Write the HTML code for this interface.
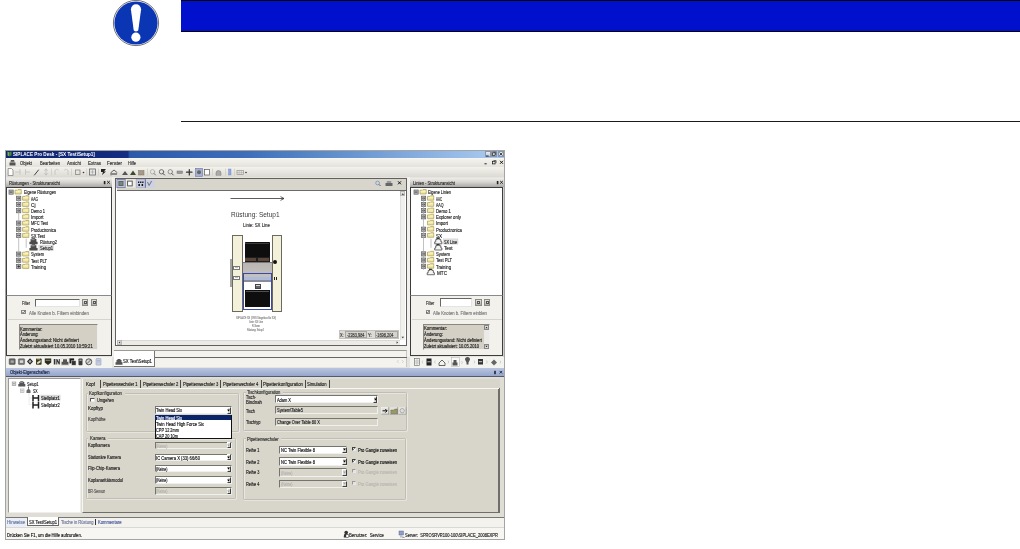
<!DOCTYPE html>
<html><head><meta charset="utf-8">
<style>
*{margin:0;padding:0;box-sizing:border-box}
html,body{width:1020px;height:549px;overflow:hidden;background:#fff;position:relative}
body{font-family:"Liberation Sans",sans-serif;color:#000}
.a{position:absolute}
.t{position:absolute;white-space:nowrap}
.t.s{-webkit-text-stroke:0.15px currentColor}
</style></head><body>
<svg class="a" style="left:110px;top:0px" width="52" height="48" viewBox="110 0 52 48"><circle cx="136" cy="23" r="22.6" fill="#fff" stroke="#333" stroke-width="0.7"/><circle cx="136" cy="23" r="21.6" fill="#0a36b4"/><path d="M130.9 9.3 A5.1 5.1 0 0 1 141.1 9.3 L138.3 30.3 Q138 31.4 136 31.4 Q134 31.4 133.7 30.3 Z" fill="#fff"/><circle cx="135.9" cy="37.2" r="4.6" fill="#fff"/></svg>
<div class="a" style="left:181.00px;top:0.00px;width:839.00px;height:32.00px;background:#000"></div>
<div class="a" style="left:181.00px;top:1.00px;width:839.00px;height:30.00px;background:#0010cc"></div>
<div class="a" style="left:181.00px;top:120.60px;width:839.00px;height:1.30px;background:#1a1a1a"></div>
<div class="a" style="left:0;top:0;width:1020px;height:549px;filter:blur(0.3px)">
<div class="a" style="left:4.80px;top:149.60px;width:500.40px;height:390.40px;background:#e6e4de;border:1.6px solid #a4a4a4"></div>
<div class="a" style="left:6.00px;top:150.50px;width:498.50px;height:7.50px;background:linear-gradient(90deg,#0c2470 0%,#142c82 24.4%,#2c58aa 24.8%,#3262b2 35%,#3e6eba 48%,#5a8ac8 63%,#80a8dc 80%,#a4c6ee 96%)"></div>
<svg class="a" style="left:6px;top:150px" width="8" height="8" viewBox="6 150 8 8"><path d="M7.5 151.5l2 1v4l-2-1z" fill="#7ab050"/><path d="M9.5 152l2-0.5v4l-2 0.5z" fill="#4a8a30"/></svg>
<div class="t" style="left:13.00px;top:152.44px;font-size:4.600px;line-height:5.52px;color:#fff;font-weight:bold;transform:scaleX(1.0067);transform-origin:0 50%;">SIPLACE Pro Desk - [SX Test\Setup1]</div>
<div class="a" style="left:484.50px;top:151.00px;width:6.20px;height:6.20px;background:linear-gradient(#e8eef6,#c4ccd8);border:0.5px solid #8a96a8"></div>
<div class="a" style="left:491.00px;top:151.00px;width:6.20px;height:6.20px;background:linear-gradient(#e8eef6,#c4ccd8);border:0.5px solid #8a96a8"></div>
<div class="a" style="left:497.80px;top:151.00px;width:6.20px;height:6.20px;background:linear-gradient(#e8eef6,#c4ccd8);border:0.5px solid #8a96a8"></div>
<svg class="a" style="left:484px;top:150px" width="21" height="8" viewBox="484 150 21 8"><path d="M486 156h2.6" stroke="#222" stroke-width="0.9"/><rect x="492.5" y="152.8" width="2.6" height="2.8" fill="none" stroke="#222" stroke-width="0.7"/><path d="M493.3 152.2h2.4v2.6" fill="none" stroke="#222" stroke-width="0.6"/><path d="M499.5 152.5l3 3M502.5 152.5l-3 3" stroke="#222" stroke-width="0.8"/></svg>
<div class="a" style="left:6.00px;top:158.00px;width:498.50px;height:9.00px;background:linear-gradient(#f6f5f1,#e4e2da)"></div>
<svg class="a" style="left:8px;top:159px" width="9" height="8" viewBox="8 159 9 8"><path d="M9.5 165.5v-3h6v3z" fill="#555"/><path d="M10.5 162.5v-2h4v2z" fill="#777"/><rect x="11" y="160" width="3" height="1" fill="#555"/></svg>
<div class="t s" style="left:20.00px;top:161.14px;font-size:4.600px;line-height:5.52px;color:#333;transform:scaleX(0.9025);transform-origin:0 50%;">Objekt</div>
<div class="t s" style="left:40.00px;top:161.14px;font-size:4.600px;line-height:5.52px;color:#333;transform:scaleX(0.8988);transform-origin:0 50%;">Bearbeiten</div>
<div class="t s" style="left:67.00px;top:161.14px;font-size:4.600px;line-height:5.52px;color:#333;transform:scaleX(0.9280);transform-origin:0 50%;">Ansicht</div>
<div class="t s" style="left:88.00px;top:161.14px;font-size:4.600px;line-height:5.52px;color:#333;transform:scaleX(0.9971);transform-origin:0 50%;">Extras</div>
<div class="t s" style="left:107.00px;top:161.14px;font-size:4.600px;line-height:5.52px;color:#333;transform:scaleX(0.9617);transform-origin:0 50%;">Fenster</div>
<div class="t s" style="left:128.00px;top:161.14px;font-size:4.600px;line-height:5.52px;color:#333;transform:scaleX(0.8692);transform-origin:0 50%;">Hilfe</div>
<svg class="a" style="left:482px;top:158px" width="22" height="9" viewBox="482 158 22 9"><path d="M484.5 163.8h2.2" stroke="#222" stroke-width="1"/><rect x="492.5" y="161.3" width="2.6" height="2.6" fill="none" stroke="#222" stroke-width="0.8"/><path d="M493.5 160.5h2.6v2.6" fill="none" stroke="#222" stroke-width="0.6"/><path d="M500 160.8l3 3M503 160.8l-3 3" stroke="#111" stroke-width="1"/></svg>
<div class="a" style="left:6.00px;top:167.00px;width:498.50px;height:10.00px;background:linear-gradient(#f3f2ed,#dcdad2)"></div>
<svg class="a" style="left:6px;top:167px" width="250" height="10" viewBox="6 167 250 10"><g fill="none" stroke-linecap="round"><path d="M8.5 168.5h3l1.5 1.5v5.5h-4.5z" fill="#fff" stroke="#777" stroke-width="0.7"/><path d="M15.5 172h4.5M20 169.5v5" stroke="#c8c8c8" stroke-width="1"/><path d="M25.5 169.5v5M25.5 172h4" stroke="#c8c8c8" stroke-width="1"/><path d="M34.5 175l4-5" stroke="#444" stroke-width="1"/><path d="M46 169v6M44.5 170.5l1.5-1.5 1.5 1.5M44.5 173.5l1.5 1.5 1.5-1.5" stroke="#bbb" stroke-width="0.8"/><path d="M55 174.5v-3.5a2 2 0 0 1 3.5-1" stroke="#c4c4c4" stroke-width="0.9"/><path d="M64.5 170a2 2 0 0 1 3.5 1v3.5" stroke="#c4c4c4" stroke-width="0.9"/><rect x="75.5" y="170" width="4.5" height="4.5" stroke="#888" stroke-width="0.8"/><circle cx="83.5" cy="172.5" r="0.8" fill="#333" stroke="none"/><rect x="89.5" y="169" width="6" height="6" fill="#e8e8e8" stroke="#666" stroke-width="0.8"/><path d="M91 172h3M92.5 170.5v3" stroke="#999" stroke-width="0.6"/><path d="M101 169h5l-2 2.5h2l-4 3.5 1-3h-2z" fill="#222" stroke="none"/><path d="M111 175v-2.5l3-2.5 3 2.5" stroke="#555" stroke-width="0.9"/><rect x="111" y="173" width="6" height="2" fill="#888" stroke="none"/><path d="M122 175l3-4 3 4z" fill="#555" stroke="none"/><path d="M130 175l3-4.5 3 4.5z" fill="#3a4a2a" stroke="none"/><rect x="138.5" y="170.5" width="5.5" height="4.5" fill="#a89888" stroke="#776" stroke-width="0.5"/><circle cx="152.5" cy="171.8" r="2.2" stroke="#aaa" stroke-width="0.8"/><path d="M154 173.5l1.5 1.5" stroke="#777" stroke-width="1"/><circle cx="161.5" cy="171.8" r="2.2" stroke="#666" stroke-width="0.9"/><path d="M163 173.5l1.5 1.5" stroke="#444" stroke-width="1"/><circle cx="170.3" cy="171.8" r="2.2" stroke="#888" stroke-width="0.9"/><path d="M171.8 173.5l1.5 1.5" stroke="#555" stroke-width="1"/><rect x="177" y="171" width="5.5" height="2.5" fill="#999" stroke="#777" stroke-width="0.5"/><path d="M189.3 169.5v5.5M186.5 172.2h5.5" stroke="#333" stroke-width="1.2"/><rect x="195.5" y="168.3" width="7" height="8" fill="#a8b0d0" stroke="#6a78b0" stroke-width="0.6"/><circle cx="199" cy="172.3" r="2" fill="#666" stroke="none"/><rect x="204.5" y="169.5" width="5" height="5.5" fill="#fff" stroke="#555" stroke-width="0.7"/><path d="M216 175v-2a2.5 2.5 0 0 1 5 0v2z" fill="#aaa" stroke="#777" stroke-width="0.5"/><rect x="228.5" y="169" width="2.5" height="6" fill="#90a8e0" stroke="#7088c0" stroke-width="0.4"/><rect x="237" y="170.5" width="6.5" height="4" stroke="#888" stroke-width="0.6"/><path d="M237 172.5h6.5M239.2 170.5v4M241.4 170.5v4" stroke="#999" stroke-width="0.4"/><circle cx="246" cy="172.5" r="0.8" fill="#333" stroke="none"/></g><g fill="#c8c6be"><rect x="51" y="168.5" width="0.6" height="7"/><rect x="71" y="168.5" width="0.6" height="7"/><rect x="86.5" y="168.5" width="0.6" height="7"/><rect x="98" y="168.5" width="0.6" height="7"/><rect x="147" y="168.5" width="0.6" height="7"/><rect x="212" y="168.5" width="0.6" height="7"/><rect x="225" y="168.5" width="0.6" height="7"/><rect x="234" y="168.5" width="0.6" height="7"/></g></svg>
<div class="a" style="left:6.00px;top:177.50px;width:105.50px;height:9.50px;background:linear-gradient(#eeede9 0%,#d6d5d1 45%,#a9a8a4 100%)"></div>
<div class="t s" style="left:9.20px;top:181.04px;font-size:4.600px;line-height:5.52px;color:#2a2a2a;transform:scaleX(0.8944);transform-origin:0 50%;">Rüstungen - Strukturansicht</div>
<svg class="a" style="left:101.5px;top:179px" width="10" height="7" viewBox="101.5 179 10 7"><rect x="103.3" y="181" width="1.6" height="3.2" fill="#222"/><path d="M106.7 181l2.6 2.6M109.3 181l-2.6 2.6" stroke="#111" stroke-width="0.9"/></svg>
<div class="a" style="left:6.00px;top:187.00px;width:105.50px;height:109.50px;background:#fff;border:1px solid #3c3c3c;border-top-width:1.4px;border-bottom:none"></div>
<svg class="a" style="left:4.300000000000001px;top:186.2px" width="95" height="88.60000000000001" viewBox="4.300000000000001 186.2 95 88.60000000000001"><rect x="9.30" y="190.20" width="4.2" height="4.2" fill="#b4b4b4" stroke="#606060" stroke-width="0.7"/><path d="M10.10 192.30h2.6" stroke="#222" stroke-width="0.7"/><path d="M15.30 190.40h2.4l0.7-0.7h3.1v4.5h-6.2z" fill="#efe6a2" stroke="#a89a50" stroke-width="0.7" stroke-linejoin="round"/><path d="M15.90 191.60h5.2" stroke="#fff8d0" stroke-width="0.7"/><rect x="16.90" y="196.40" width="4.2" height="4.2" fill="#b4b4b4" stroke="#606060" stroke-width="0.7"/><path d="M17.70 198.50h2.6" stroke="#222" stroke-width="0.7"/><path d="M19.00 197.20v2.6" stroke="#222" stroke-width="0.7"/><path d="M22.90 196.60h2.4l0.7-0.7h3.1v4.5h-6.2z" fill="#efe6a2" stroke="#a89a50" stroke-width="0.7" stroke-linejoin="round"/><path d="M23.50 197.80h5.2" stroke="#fff8d0" stroke-width="0.7"/><rect x="16.90" y="202.60" width="4.2" height="4.2" fill="#b4b4b4" stroke="#606060" stroke-width="0.7"/><path d="M17.70 204.70h2.6" stroke="#222" stroke-width="0.7"/><path d="M19.00 203.40v2.6" stroke="#222" stroke-width="0.7"/><path d="M22.90 202.80h2.4l0.7-0.7h3.1v4.5h-6.2z" fill="#efe6a2" stroke="#a89a50" stroke-width="0.7" stroke-linejoin="round"/><path d="M23.50 204.00h5.2" stroke="#fff8d0" stroke-width="0.7"/><rect x="16.90" y="208.80" width="4.2" height="4.2" fill="#b4b4b4" stroke="#606060" stroke-width="0.7"/><path d="M17.70 210.90h2.6" stroke="#222" stroke-width="0.7"/><path d="M19.00 209.60v2.6" stroke="#222" stroke-width="0.7"/><path d="M22.90 209.00h2.4l0.7-0.7h3.1v4.5h-6.2z" fill="#efe6a2" stroke="#a89a50" stroke-width="0.7" stroke-linejoin="round"/><path d="M23.50 210.20h5.2" stroke="#fff8d0" stroke-width="0.7"/><path d="M22.90 215.20h2.4l0.7-0.7h3.1v4.5h-6.2z" fill="#efe6a2" stroke="#a89a50" stroke-width="0.7" stroke-linejoin="round"/><path d="M23.50 216.40h5.2" stroke="#fff8d0" stroke-width="0.7"/><rect x="16.90" y="221.20" width="4.2" height="4.2" fill="#b4b4b4" stroke="#606060" stroke-width="0.7"/><path d="M17.70 223.30h2.6" stroke="#222" stroke-width="0.7"/><path d="M19.00 222.00v2.6" stroke="#222" stroke-width="0.7"/><path d="M22.90 221.40h2.4l0.7-0.7h3.1v4.5h-6.2z" fill="#efe6a2" stroke="#a89a50" stroke-width="0.7" stroke-linejoin="round"/><path d="M23.50 222.60h5.2" stroke="#fff8d0" stroke-width="0.7"/><rect x="16.90" y="227.40" width="4.2" height="4.2" fill="#b4b4b4" stroke="#606060" stroke-width="0.7"/><path d="M17.70 229.50h2.6" stroke="#222" stroke-width="0.7"/><path d="M19.00 228.20v2.6" stroke="#222" stroke-width="0.7"/><path d="M22.90 227.60h2.4l0.7-0.7h3.1v4.5h-6.2z" fill="#efe6a2" stroke="#a89a50" stroke-width="0.7" stroke-linejoin="round"/><path d="M23.50 228.80h5.2" stroke="#fff8d0" stroke-width="0.7"/><rect x="16.90" y="233.60" width="4.2" height="4.2" fill="#b4b4b4" stroke="#606060" stroke-width="0.7"/><path d="M17.70 235.70h2.6" stroke="#222" stroke-width="0.7"/><path d="M22.90 233.80h2.4l0.7-0.7h3.1v4.5h-6.2z" fill="#efe6a2" stroke="#a89a50" stroke-width="0.7" stroke-linejoin="round"/><path d="M23.50 235.00h5.2" stroke="#fff8d0" stroke-width="0.7"/><path d="M29.70 244.50v-2.6h1.2v-2.6h1.2v-1.2h3.4v1.2h1.2v2.6h1.2v2.6z" fill="#4a4a4a"/><rect x="31.60" y="238.60" width="3.4" height="1.8" fill="#8a8a8a"/><path d="M29.70 250.70v-2.6h1.2v-2.6h1.2v-1.2h3.4v1.2h1.2v2.6h1.2v2.6z" fill="#4a4a4a"/><rect x="31.60" y="244.80" width="3.4" height="1.8" fill="#8a8a8a"/><rect x="39.10" y="245.40" width="14.60" height="5.4" fill="#e2e2e2" stroke="#999" stroke-width="0.4" stroke-dasharray="0.6 0.6"/><rect x="16.90" y="252.20" width="4.2" height="4.2" fill="#b4b4b4" stroke="#606060" stroke-width="0.7"/><path d="M17.70 254.30h2.6" stroke="#222" stroke-width="0.7"/><path d="M19.00 253.00v2.6" stroke="#222" stroke-width="0.7"/><path d="M22.90 252.40h2.4l0.7-0.7h3.1v4.5h-6.2z" fill="#efe6a2" stroke="#a89a50" stroke-width="0.7" stroke-linejoin="round"/><path d="M23.50 253.60h5.2" stroke="#fff8d0" stroke-width="0.7"/><rect x="16.90" y="258.40" width="4.2" height="4.2" fill="#b4b4b4" stroke="#606060" stroke-width="0.7"/><path d="M17.70 260.50h2.6" stroke="#222" stroke-width="0.7"/><path d="M19.00 259.20v2.6" stroke="#222" stroke-width="0.7"/><path d="M22.90 258.60h2.4l0.7-0.7h3.1v4.5h-6.2z" fill="#efe6a2" stroke="#a89a50" stroke-width="0.7" stroke-linejoin="round"/><path d="M23.50 259.80h5.2" stroke="#fff8d0" stroke-width="0.7"/><rect x="16.90" y="264.60" width="4.2" height="4.2" fill="#b4b4b4" stroke="#606060" stroke-width="0.7"/><path d="M17.70 266.70h2.6" stroke="#222" stroke-width="0.7"/><path d="M19.00 265.40v2.6" stroke="#222" stroke-width="0.7"/><path d="M22.90 264.80h2.4l0.7-0.7h3.1v4.5h-6.2z" fill="#efe6a2" stroke="#a89a50" stroke-width="0.7" stroke-linejoin="round"/><path d="M23.50 266.00h5.2" stroke="#fff8d0" stroke-width="0.7"/><path d="M19 196V264" stroke="#a8a8a8" stroke-width="0.7"/><path d="M26.5 239V248" stroke="#a8a8a8" stroke-width="0.7"/></svg>
<div class="t s" style="left:23.70px;top:190.44px;font-size:4.600px;line-height:5.52px;color:#262626;transform:scaleX(0.8454);transform-origin:0 50%;">Eigene Rüstungen</div>
<div class="t s" style="left:31.30px;top:196.64px;font-size:4.600px;line-height:5.52px;color:#262626;transform:scaleX(0.7203);transform-origin:0 50%;">AAG</div>
<div class="t s" style="left:31.30px;top:202.84px;font-size:4.600px;line-height:5.52px;color:#262626;transform:scaleX(1.0357);transform-origin:0 50%;">Cj</div>
<div class="t s" style="left:31.30px;top:209.04px;font-size:4.600px;line-height:5.52px;color:#262626;transform:scaleX(0.8692);transform-origin:0 50%;">Demo 1</div>
<div class="t s" style="left:31.30px;top:215.24px;font-size:4.600px;line-height:5.52px;color:#262626;transform:scaleX(0.9587);transform-origin:0 50%;">Import</div>
<div class="t s" style="left:31.30px;top:221.44px;font-size:4.600px;line-height:5.52px;color:#262626;transform:scaleX(0.8675);transform-origin:0 50%;">MFC Test</div>
<div class="t s" style="left:31.30px;top:227.64px;font-size:4.600px;line-height:5.52px;color:#262626;transform:scaleX(0.8808);transform-origin:0 50%;">Productronica</div>
<div class="t s" style="left:31.30px;top:233.84px;font-size:4.600px;line-height:5.52px;color:#262626;transform:scaleX(0.8878);transform-origin:0 50%;">SX Test</div>
<div class="t s" style="left:39.90px;top:240.04px;font-size:4.600px;line-height:5.52px;color:#262626;transform:scaleX(0.8632);transform-origin:0 50%;">Rüstung2</div>
<div class="t s" style="left:39.90px;top:246.24px;font-size:4.600px;line-height:5.52px;color:#262626;transform:scaleX(0.8916);transform-origin:0 50%;">Setup1</div>
<div class="t s" style="left:31.30px;top:252.44px;font-size:4.600px;line-height:5.52px;color:#262626;transform:scaleX(0.8476);transform-origin:0 50%;">System</div>
<div class="t s" style="left:31.30px;top:258.64px;font-size:4.600px;line-height:5.52px;color:#262626;transform:scaleX(0.8983);transform-origin:0 50%;">Test PLT</div>
<div class="t s" style="left:31.30px;top:264.84px;font-size:4.600px;line-height:5.52px;color:#262626;transform:scaleX(0.9119);transform-origin:0 50%;">Training</div>
<div class="a" style="left:6.00px;top:295.30px;width:105.50px;height:61.20px;background:#f2f1ec;border:1px solid #3c3c3c;border-top:1.3px solid #8a8a8a;border-bottom-width:1.3px"></div>
<div class="t s" style="left:21.80px;top:300.74px;font-size:4.600px;line-height:5.52px;color:#333;transform:scaleX(0.7825);transform-origin:0 50%;">Filter</div>
<div class="a" style="left:35.00px;top:298.50px;width:44.50px;height:8.00px;background:#fff;border:0.9px solid #666;border-right-color:#e4e4e4;border-bottom-color:#e4e4e4"></div>
<div class="a" style="left:82.00px;top:299.00px;width:6.20px;height:6.50px;background:linear-gradient(#e6e5e0,#b0afa8);border:0.5px solid #8a8a84"></div>
<div class="a" style="left:83.60px;top:300.60px;width:3.00px;height:3.30px;border:0.5px solid #555;background:#d8d8d4"></div>
<div class="a" style="left:91.00px;top:299.00px;width:6.20px;height:6.50px;background:linear-gradient(#e6e5e0,#b0afa8);border:0.5px solid #8a8a84"></div>
<div class="a" style="left:92.60px;top:300.60px;width:3.00px;height:3.30px;border:0.5px solid #555;background:#d8d8d4"></div>
<div class="a" style="left:21.20px;top:309.60px;width:4.80px;height:4.80px;background:#f4f4f2;border:0.7px solid #8a8a8a"></div>
<svg class="a" style="left:21px;top:309px" width="6" height="6" viewBox="21 309 6 6"><path d="M22.2 311.8l1.2 1.3 1.8-2.6" fill="none" stroke="#444" stroke-width="0.7"/></svg>
<div class="t s" style="left:29.10px;top:310.54px;font-size:4.600px;line-height:5.52px;color:#7a7a7a;transform:scaleX(0.9385);transform-origin:0 50%;">Alle Knoten b. Filtern einbinden</div>
<div class="a" style="left:7.50px;top:319.00px;width:103.00px;height:0.70px;background:#d6d4cc"></div>
<div class="a" style="left:19.00px;top:324.00px;width:79.00px;height:25.50px;background:#d4d0c6;border:0.6px solid #8a8880;border-right-color:#eee;border-bottom-color:#eee"></div>
<div class="t s" style="left:19.70px;top:326.54px;font-size:4.600px;line-height:5.52px;color:#1a1a1a;transform:scaleX(0.8980);transform-origin:0 50%;">Kommentar:</div>
<div class="t s" style="left:19.70px;top:332.39px;font-size:4.600px;line-height:5.52px;color:#1a1a1a;transform:scaleX(0.8715);transform-origin:0 50%;">Änderung:</div>
<div class="t s" style="left:19.70px;top:338.24px;font-size:4.600px;line-height:5.52px;color:#1a1a1a;transform:scaleX(0.9192);transform-origin:0 50%;">Änderungsstand: Nicht definiert</div>
<div class="t s" style="left:19.70px;top:344.09px;font-size:4.600px;line-height:5.52px;color:#1a1a1a;transform:scaleX(0.9037);transform-origin:0 50%;">Zuletzt aktualisiert 10.05.2010 10:59:21</div>
<div class="a" style="left:6.00px;top:356.60px;width:105.50px;height:11.40px;background:#f3f3ef"></div>
<svg class="a" style="left:6px;top:356px" width="106" height="12" viewBox="6 356 106 12"><rect x="9.2" y="358.8" width="6" height="5.6" rx="0.6" fill="#666" stroke="#444" stroke-width="0.5"/><rect x="10.6" y="360.4" width="3.2" height="2.4" fill="#a8a8a8"/><rect x="18.4" y="358.8" width="6.2" height="5.6" rx="0.6" fill="#777" stroke="#555" stroke-width="0.5"/><rect x="19.8" y="360.3" width="3.4" height="2.6" fill="#d8d8d8"/><path d="M30 358.3l3 3.2-3 3.2-3-3.2z" fill="#222"/><path d="M30 359.8l1.6 1.7-1.6 1.7-1.6-1.7z" fill="#aaa"/><rect x="36" y="358.5" width="5.6" height="6.2" rx="0.8" fill="#3a3828"/><path d="M36.8 362.5l3.8-2.5v2.2l-3 2z" fill="#e8e0b0"/><rect x="37" y="358" width="3" height="1.4" fill="#c8c090"/><path d="M44.8 358.5h6.4v4l-3.2 2.5-3.2-2.5z" fill="#2a2a22"/><rect x="45.6" y="359.8" width="4.8" height="1" fill="#8a8a60"/><path d="M53.8 364.5v-5.5h1.6v5.5zM56.3 364.5v-5.5h1l1.5 3v-3h1v5.5h-1l-1.5-3v3z" fill="#333"/><path d="M61.5 364.8v-3h7v3zM63 361.8v-2.6h4v2.6z" fill="#555"/><rect x="61" y="358.5" width="8" height="7" fill="none" stroke="#ccc" stroke-width="0.4"/><rect x="69.5" y="358.4" width="4.6" height="5" fill="#1a1a1a"/><rect x="71.6" y="360.8" width="4.4" height="4.4" fill="#333" stroke="#e8e8e0" stroke-width="0.5"/><rect x="78.5" y="358.5" width="4" height="6.8" rx="0.8" fill="#3a3a3a"/><rect x="79.4" y="359.6" width="2.2" height="1.2" fill="#bbb"/><circle cx="88.8" cy="361.8" r="3" fill="#d8d8d8" stroke="#333" stroke-width="0.8"/><path d="M86.8 363.8l4-4" stroke="#333" stroke-width="0.7"/><rect x="96" y="358.5" width="5" height="6.6" rx="0.6" fill="#c8d0e4" stroke="#8890b0" stroke-width="0.5"/><path d="M97 360.5h3M97 362h3" stroke="#8890b0" stroke-width="0.4"/></svg>
<div class="a" style="left:111.50px;top:177.00px;width:4.50px;height:179.50px;background:linear-gradient(90deg,#f4f3f0,#eceae6)"></div>
<div class="a" style="left:115.00px;top:177.50px;width:292.00px;height:168.80px;background:#fff;border:1.8px solid #606060"></div>
<div class="a" style="left:116.90px;top:178.80px;width:288.80px;height:12.00px;background:#d8d5cd;border-bottom:1.2px solid #6a6a6a"></div>
<svg class="a" style="left:116px;top:178px" width="40" height="12" viewBox="116 178 40 12"><rect x="116.9" y="179.3" width="8.3" height="8.4" fill="#c4c6d4" stroke="#5a6a9a" stroke-width="0.7"/><rect x="118.4" y="181" width="5.1" height="5" fill="#5e6866"/><rect x="119.4" y="182" width="3.1" height="3" fill="#7a8480"/><rect x="125.8" y="179.3" width="9.8" height="8.4" fill="#ecebe6"/><rect x="127.6" y="181.1" width="4.6" height="4.8" fill="#fff" stroke="#4a4a4a" stroke-width="0.9"/><rect x="136.2" y="179.3" width="9" height="8.4" fill="#c6cce0" stroke="#9aa4c8" stroke-width="0.5"/><path d="M138 181.6h1.3v1.4H138zM140.1 181.6h1.3v1.4h-1.3zM142.2 181.6h1.3v1.4h-1.3zM138.4 184h1.5v2h-1.5zM141.6 184h1.5v2h-1.5z" fill="#111"/><path d="M145.4 179.3v8.4" stroke="#34447a" stroke-width="0.8"/><rect x="145.8" y="179.3" width="8.8" height="8.4" fill="#ccd2e4"/><path d="M147.5 182l1.6 3.5 2.5-4.5" fill="none" stroke="#666" stroke-width="0.9"/></svg>
<svg class="a" style="left:372px;top:179px" width="34" height="10" viewBox="372 179 34 10"><circle cx="377.6" cy="183" r="1.9" fill="none" stroke="#6a8ab8" stroke-width="0.7"/><path d="M379 184.4l1.6 1.6" stroke="#555" stroke-width="0.9"/><path d="M385.5 186v-3h7v3z" fill="#666"/><rect x="386.8" y="181" width="4.4" height="2" fill="#999"/><path d="M398 181.3l3 3M401 181.3l-3 3" stroke="#111" stroke-width="1"/></svg>
<div class="a" style="left:400.00px;top:191.00px;width:5.40px;height:149.00px;background:#f1f0ec;border-left:0.5px solid #e0e0e0"></div>
<div class="a" style="left:400.40px;top:191.40px;width:4.70px;height:4.70px;background:#e6e4de;border:0.4px solid #b8b8b8"></div>
<svg class="a" style="left:400px;top:191px" width="6" height="149" viewBox="400 191 6 149"><path d="M401.5 194.7l1.3-1.5 1.3 1.5z" fill="#333"/><path d="M401.5 336.8l1.3 1.5 1.3-1.5z" fill="#333"/></svg>
<div class="a" style="left:116.90px;top:340.00px;width:283.10px;height:5.00px;background:#ecebe6;border-top:0.5px solid #d8d8d8"></div>
<div class="a" style="left:117.30px;top:340.30px;width:4.80px;height:4.50px;background:#e6e4de;border:0.4px solid #b8b8b8"></div>
<svg class="a" style="left:116px;top:340px" width="290" height="6" viewBox="116 340 290 6"><path d="M120.2 341.2v2.6l-1.5-1.3z" fill="#333"/><path d="M396.6 341.2v2.6l1.5-1.3z" fill="#333"/></svg>
<div class="a" style="left:400.00px;top:340.00px;width:5.40px;height:5.00px;background:#fff"></div>
<div class="a" style="left:339.00px;top:330.30px;width:59.50px;height:8.30px;background:#dddbd5;border:0.5px solid #c4c2bc"></div>
<div class="t s" style="left:340.30px;top:332.74px;font-size:4.600px;line-height:5.52px;color:#333;transform:scaleX(0.8279);transform-origin:0 50%;">X:</div>
<div class="a" style="left:345.00px;top:331.00px;width:21.50px;height:7.00px;background:#d6d4ce;border:0.5px solid #a8a6a0"></div>
<div class="t s" style="left:346.50px;top:332.74px;font-size:4.600px;line-height:5.52px;color:#333;transform:scaleX(0.8447);transform-origin:0 50%;">-2283,984</div>
<div class="t s" style="left:368.00px;top:332.74px;font-size:4.600px;line-height:5.52px;color:#333;transform:scaleX(0.8795);transform-origin:0 50%;">Y:</div>
<div class="a" style="left:374.50px;top:331.00px;width:23.50px;height:7.00px;background:#d6d4ce;border:0.5px solid #a8a6a0"></div>
<div class="t s" style="left:376.00px;top:332.74px;font-size:4.600px;line-height:5.52px;color:#333;transform:scaleX(0.8447);transform-origin:0 50%;">-1698,204</div>
<svg class="a" style="left:228px;top:194px" width="60" height="8" viewBox="228 194 60 8"><path d="M230.5 198.5H284" stroke="#333" stroke-width="0.8"/><path d="M280.5 196.6l3.5 1.9-3.5 1.9" fill="none" stroke="#333" stroke-width="0.8"/></svg>
<div class="t" style="left:231.00px;top:210.39px;font-size:6.523px;line-height:7.83px;color:#3a3a3a;transform:scaleX(0.826);transform-origin:0 50%;font-size:7.9px;line-height:9px;top:209.8px">Rüstung: Setup1</div>
<div class="t s" style="left:243.00px;top:223.24px;font-size:4.600px;line-height:5.52px;color:#333;transform:scaleX(0.9511);transform-origin:0 50%;">Linie: SX Line</div>
<div class="a" style="left:232.00px;top:234.50px;width:10.50px;height:77.20px;background:#f3f1da;border:0.8px solid #6a6a60"></div>
<div class="a" style="left:272.00px;top:234.50px;width:9.60px;height:77.20px;background:#f3f1da;border:0.8px solid #6a6a60"></div>
<div class="a" style="left:230.30px;top:259.00px;width:1.80px;height:28.00px;background:#a4a4a4"></div>
<div class="a" style="left:244.50px;top:242.40px;width:25.50px;height:14.30px;background:#0e0e0e;border-radius:0.6px"></div>
<div class="a" style="left:245.20px;top:243.20px;width:24.00px;height:1.00px;background:#3a3a3a"></div>
<div class="a" style="left:244.50px;top:256.50px;width:25.50px;height:5.50px;background:#1e1e1e"></div>
<div class="a" style="left:245.30px;top:258.00px;width:11.00px;height:3.00px;background:#5a4638"></div>
<div class="a" style="left:258.00px;top:258.00px;width:11.00px;height:3.00px;background:#5a4638"></div>
<div class="a" style="left:242.50px;top:262.00px;width:29.50px;height:10.80px;background:linear-gradient(#7a7876 0%,#7a7876 12%,#bab6b4 13%,#c2bebc 100%)"></div>
<div class="a" style="left:272.80px;top:260.20px;width:3.90px;height:3.90px;background:#111;border-radius:50%"></div>
<div class="a" style="left:242.50px;top:272.60px;width:29.50px;height:37.40px;background:#fff;border:1px solid #3a4aa8"></div>
<div class="a" style="left:243.50px;top:273.60px;width:27.50px;height:3.00px;background:#c4c0c0"></div>
<div class="a" style="left:243.50px;top:276.60px;width:27.50px;height:3.70px;background:#aebcdc"></div>
<div class="a" style="left:243.50px;top:280.30px;width:27.50px;height:2.20px;background:#8a8a98"></div>
<div class="a" style="left:233.00px;top:265.50px;width:7.20px;height:4.20px;background:#fff;border:0.6px solid #777"></div>
<div class="a" style="left:233.00px;top:275.50px;width:7.20px;height:4.20px;background:#fff;border:0.6px solid #777"></div>
<svg class="a" style="left:233px;top:265px" width="8" height="15" viewBox="233 265 8 15"><path d="M235 267.6h3M235 277.6h3" stroke="#888" stroke-width="0.6"/></svg>
<div class="a" style="left:273.60px;top:276.50px;width:1.60px;height:3.80px;background:#222"></div>
<div class="a" style="left:275.80px;top:276.50px;width:1.60px;height:3.80px;background:#222"></div>
<div class="a" style="left:255.00px;top:284.00px;width:6.00px;height:5.20px;background:#d8d8d8;border:0.6px solid #444"></div>
<div class="a" style="left:256.40px;top:285.60px;width:3.20px;height:2.00px;background:#666"></div>
<div class="a" style="left:245.00px;top:290.40px;width:25.00px;height:16.60px;background:#0e0e0e"></div>
<div class="a" style="left:246.00px;top:291.20px;width:23.00px;height:1.20px;background:#505050"></div>
<div class="t s" style="left:236.00px;top:316.76px;font-size:2.900px;line-height:3.48px;color:#8a8a8a;transform:scaleX(0.8441);transform-origin:0 50%;">SIPLACE SX (TRS Stagebox für SX)</div>
<div class="t s" style="left:249.00px;top:320.71px;font-size:2.900px;line-height:3.48px;color:#8a8a8a;transform:scaleX(0.7823);transform-origin:0 50%;">Linie: SX Line</div>
<div class="t s" style="left:252.00px;top:324.66px;font-size:2.900px;line-height:3.48px;color:#8a8a8a;transform:scaleX(0.8411);transform-origin:0 50%;">P-Scan</div>
<div class="t s" style="left:247.00px;top:328.61px;font-size:2.900px;line-height:3.48px;color:#8a8a8a;transform:scaleX(0.7869);transform-origin:0 50%;">Rüstung: Setup1</div>
<div class="a" style="left:112.00px;top:346.30px;width:295.00px;height:5.00px;background:#eeede8"></div>
<div class="a" style="left:113.80px;top:350.20px;width:293.20px;height:17.00px;background:#f4f3ee;border:0.9px solid #9a9a96;border-bottom:none;border-right-color:#c8c8c4"></div>
<div class="a" style="left:154.00px;top:356.60px;width:252.50px;height:0.80px;background:#666"></div>
<div class="a" style="left:114.00px;top:351.00px;width:40.50px;height:15.80px;background:#fff;border-bottom:0.9px solid #777;border-right:0.9px solid #777"></div>
<svg class="a" style="left:114px;top:357px" width="9" height="9" viewBox="114 357 9 9"><path d="M115.5 364.8v-2.5h1v-2.3h1v-1h3v1h1v2.3h1v2.5z" fill="#555"/></svg>
<div class="t s" style="left:123.00px;top:359.34px;font-size:4.600px;line-height:5.52px;color:#222;transform:scaleX(0.9170);transform-origin:0 50%;">SX Test\Setup1</div>
<svg class="a" style="left:396px;top:358px" width="10" height="7" viewBox="396 358 10 7"><path d="M398.5 360l-1.3 1.5 1.3 1.5M402 360l1.3 1.5-1.3 1.5" fill="none" stroke="#c0c0c0" stroke-width="0.6"/></svg>
<div class="a" style="left:407.00px;top:177.00px;width:3.00px;height:179.50px;background:#f2f1ee"></div>
<div class="a" style="left:410.00px;top:177.50px;width:94.50px;height:9.50px;background:linear-gradient(#eeede9 0%,#d6d5d1 45%,#a9a8a4 100%)"></div>
<div class="t s" style="left:413.20px;top:181.04px;font-size:4.600px;line-height:5.52px;color:#2a2a2a;transform:scaleX(0.8927);transform-origin:0 50%;">Linien - Strukturansicht</div>
<svg class="a" style="left:494.5px;top:179px" width="10" height="7" viewBox="494.5 179 10 7"><rect x="496.3" y="181" width="1.6" height="3.2" fill="#222"/><path d="M499.7 181l2.6 2.6M502.3 181l-2.6 2.6" stroke="#111" stroke-width="0.9"/></svg>
<div class="a" style="left:410.00px;top:187.00px;width:92.80px;height:109.50px;background:#fff;border:1px solid #3c3c3c;border-top-width:1.4px;border-bottom:none"></div>
<div class="a" style="left:502.80px;top:187.00px;width:1.70px;height:169.50px;background:#d0d0d0"></div>
<svg class="a" style="left:409px;top:186.2px" width="95" height="94.52" viewBox="409 186.2 95 94.52"><rect x="414.00" y="190.20" width="4.2" height="4.2" fill="#b4b4b4" stroke="#606060" stroke-width="0.7"/><path d="M414.80 192.30h2.6" stroke="#222" stroke-width="0.7"/><path d="M420.00 190.40h2.4l0.7-0.7h3.1v4.5h-6.2z" fill="#efe6a2" stroke="#a89a50" stroke-width="0.7" stroke-linejoin="round"/><path d="M420.60 191.60h5.2" stroke="#fff8d0" stroke-width="0.7"/><rect x="421.50" y="196.38" width="4.2" height="4.2" fill="#b4b4b4" stroke="#606060" stroke-width="0.7"/><path d="M422.30 198.48h2.6" stroke="#222" stroke-width="0.7"/><path d="M423.60 197.18v2.6" stroke="#222" stroke-width="0.7"/><path d="M427.50 196.58h2.4l0.7-0.7h3.1v4.5h-6.2z" fill="#efe6a2" stroke="#a89a50" stroke-width="0.7" stroke-linejoin="round"/><path d="M428.10 197.78h5.2" stroke="#fff8d0" stroke-width="0.7"/><rect x="421.50" y="202.56" width="4.2" height="4.2" fill="#b4b4b4" stroke="#606060" stroke-width="0.7"/><path d="M422.30 204.66h2.6" stroke="#222" stroke-width="0.7"/><path d="M423.60 203.36v2.6" stroke="#222" stroke-width="0.7"/><path d="M427.50 202.76h2.4l0.7-0.7h3.1v4.5h-6.2z" fill="#efe6a2" stroke="#a89a50" stroke-width="0.7" stroke-linejoin="round"/><path d="M428.10 203.96h5.2" stroke="#fff8d0" stroke-width="0.7"/><rect x="421.50" y="208.74" width="4.2" height="4.2" fill="#b4b4b4" stroke="#606060" stroke-width="0.7"/><path d="M422.30 210.84h2.6" stroke="#222" stroke-width="0.7"/><path d="M423.60 209.54v2.6" stroke="#222" stroke-width="0.7"/><path d="M427.50 208.94h2.4l0.7-0.7h3.1v4.5h-6.2z" fill="#efe6a2" stroke="#a89a50" stroke-width="0.7" stroke-linejoin="round"/><path d="M428.10 210.14h5.2" stroke="#fff8d0" stroke-width="0.7"/><rect x="421.50" y="214.92" width="4.2" height="4.2" fill="#b4b4b4" stroke="#606060" stroke-width="0.7"/><path d="M422.30 217.02h2.6" stroke="#222" stroke-width="0.7"/><path d="M423.60 215.72v2.6" stroke="#222" stroke-width="0.7"/><path d="M427.50 215.12h2.4l0.7-0.7h3.1v4.5h-6.2z" fill="#efe6a2" stroke="#a89a50" stroke-width="0.7" stroke-linejoin="round"/><path d="M428.10 216.32h5.2" stroke="#fff8d0" stroke-width="0.7"/><path d="M427.50 221.30h2.4l0.7-0.7h3.1v4.5h-6.2z" fill="#efe6a2" stroke="#a89a50" stroke-width="0.7" stroke-linejoin="round"/><path d="M428.10 222.50h5.2" stroke="#fff8d0" stroke-width="0.7"/><rect x="421.50" y="227.28" width="4.2" height="4.2" fill="#b4b4b4" stroke="#606060" stroke-width="0.7"/><path d="M422.30 229.38h2.6" stroke="#222" stroke-width="0.7"/><path d="M423.60 228.08v2.6" stroke="#222" stroke-width="0.7"/><path d="M427.50 227.48h2.4l0.7-0.7h3.1v4.5h-6.2z" fill="#efe6a2" stroke="#a89a50" stroke-width="0.7" stroke-linejoin="round"/><path d="M428.10 228.68h5.2" stroke="#fff8d0" stroke-width="0.7"/><rect x="421.50" y="233.46" width="4.2" height="4.2" fill="#b4b4b4" stroke="#606060" stroke-width="0.7"/><path d="M422.30 235.56h2.6" stroke="#222" stroke-width="0.7"/><path d="M427.50 233.66h2.4l0.7-0.7h3.1v4.5h-6.2z" fill="#efe6a2" stroke="#a89a50" stroke-width="0.7" stroke-linejoin="round"/><path d="M428.10 234.86h5.2" stroke="#fff8d0" stroke-width="0.7"/><path d="M434.70 244.04v-2h1v-2.2h1.2v-1h2.8v1h1.2v2.2h1v2z" fill="#f4f4f4" stroke="#333" stroke-width="0.7"/><rect x="436.50" y="238.04" width="2.8" height="1.4" fill="#333"/><rect x="443.40" y="239.04" width="14.60" height="5.4" fill="#e2e2e2" stroke="#999" stroke-width="0.4" stroke-dasharray="0.6 0.6"/><path d="M434.70 250.22v-2h1v-2.2h1.2v-1h2.8v1h1.2v2.2h1v2z" fill="#f4f4f4" stroke="#333" stroke-width="0.7"/><rect x="436.50" y="244.22" width="2.8" height="1.4" fill="#333"/><rect x="421.50" y="252.00" width="4.2" height="4.2" fill="#b4b4b4" stroke="#606060" stroke-width="0.7"/><path d="M422.30 254.10h2.6" stroke="#222" stroke-width="0.7"/><path d="M423.60 252.80v2.6" stroke="#222" stroke-width="0.7"/><path d="M427.50 252.20h2.4l0.7-0.7h3.1v4.5h-6.2z" fill="#efe6a2" stroke="#a89a50" stroke-width="0.7" stroke-linejoin="round"/><path d="M428.10 253.40h5.2" stroke="#fff8d0" stroke-width="0.7"/><rect x="421.50" y="258.18" width="4.2" height="4.2" fill="#b4b4b4" stroke="#606060" stroke-width="0.7"/><path d="M422.30 260.28h2.6" stroke="#222" stroke-width="0.7"/><path d="M423.60 258.98v2.6" stroke="#222" stroke-width="0.7"/><path d="M427.50 258.38h2.4l0.7-0.7h3.1v4.5h-6.2z" fill="#efe6a2" stroke="#a89a50" stroke-width="0.7" stroke-linejoin="round"/><path d="M428.10 259.58h5.2" stroke="#fff8d0" stroke-width="0.7"/><rect x="421.50" y="264.36" width="4.2" height="4.2" fill="#b4b4b4" stroke="#606060" stroke-width="0.7"/><path d="M422.30 266.46h2.6" stroke="#222" stroke-width="0.7"/><path d="M423.60 265.16v2.6" stroke="#222" stroke-width="0.7"/><path d="M427.50 264.56h2.4l0.7-0.7h3.1v4.5h-6.2z" fill="#efe6a2" stroke="#a89a50" stroke-width="0.7" stroke-linejoin="round"/><path d="M428.10 265.76h5.2" stroke="#fff8d0" stroke-width="0.7"/><path d="M427.20 274.94v-2h1v-2.2h1.2v-1h2.8v1h1.2v2.2h1v2z" fill="#f4f4f4" stroke="#333" stroke-width="0.7"/><rect x="429.00" y="268.94" width="2.8" height="1.4" fill="#333"/><path d="M423.5 196V270" stroke="#a8a8a8" stroke-width="0.7"/><path d="M431 239V248" stroke="#a8a8a8" stroke-width="0.7"/></svg>
<div class="t s" style="left:428.20px;top:190.44px;font-size:4.600px;line-height:5.52px;color:#262626;transform:scaleX(0.8250);transform-origin:0 50%;">Eigene Linien</div>
<div class="t s" style="left:435.70px;top:196.62px;font-size:4.600px;line-height:5.52px;color:#262626;transform:scaleX(0.6343);transform-origin:0 50%;">AAC</div>
<div class="t s" style="left:435.70px;top:202.80px;font-size:4.600px;line-height:5.52px;color:#262626;transform:scaleX(0.7718);transform-origin:0 50%;">AAQ</div>
<div class="t s" style="left:435.70px;top:208.98px;font-size:4.600px;line-height:5.52px;color:#262626;transform:scaleX(0.9313);transform-origin:0 50%;">Demo 1</div>
<div class="t s" style="left:435.70px;top:215.16px;font-size:4.600px;line-height:5.52px;color:#262626;transform:scaleX(0.9313);transform-origin:0 50%;">Explorer only</div>
<div class="t s" style="left:435.70px;top:221.34px;font-size:4.600px;line-height:5.52px;color:#262626;transform:scaleX(0.9204);transform-origin:0 50%;">Import</div>
<div class="t s" style="left:435.70px;top:227.52px;font-size:4.600px;line-height:5.52px;color:#262626;transform:scaleX(0.9160);transform-origin:0 50%;">Productronica</div>
<div class="t s" style="left:435.70px;top:233.70px;font-size:4.600px;line-height:5.52px;color:#262626;transform:scaleX(0.9775);transform-origin:0 50%;">SX</div>
<div class="t s" style="left:444.20px;top:239.88px;font-size:4.600px;line-height:5.52px;color:#262626;transform:scaleX(0.8067);transform-origin:0 50%;">SX Line</div>
<div class="t s" style="left:444.20px;top:246.06px;font-size:4.600px;line-height:5.52px;color:#262626;transform:scaleX(1.0073);transform-origin:0 50%;">Test</div>
<div class="t s" style="left:435.70px;top:252.24px;font-size:4.600px;line-height:5.52px;color:#262626;transform:scaleX(0.9128);transform-origin:0 50%;">System</div>
<div class="t s" style="left:435.70px;top:258.42px;font-size:4.600px;line-height:5.52px;color:#262626;transform:scaleX(0.8983);transform-origin:0 50%;">Test PLT</div>
<div class="t s" style="left:435.70px;top:264.60px;font-size:4.600px;line-height:5.52px;color:#262626;transform:scaleX(0.9119);transform-origin:0 50%;">Training</div>
<div class="t s" style="left:436.70px;top:270.78px;font-size:4.600px;line-height:5.52px;color:#262626;transform:scaleX(1.0035);transform-origin:0 50%;">MTC</div>
<div class="a" style="left:410.00px;top:295.30px;width:92.80px;height:61.20px;background:#f2f1ec;border:1px solid #3c3c3c;border-top:1.3px solid #8a8a8a;border-bottom-width:1.3px"></div>
<div class="t s" style="left:425.90px;top:300.64px;font-size:4.600px;line-height:5.52px;color:#333;transform:scaleX(0.8020);transform-origin:0 50%;">Filter</div>
<div class="a" style="left:439.60px;top:298.40px;width:32.80px;height:8.20px;background:#fff;border:0.9px solid #666;border-right-color:#e4e4e4;border-bottom-color:#e4e4e4"></div>
<div class="a" style="left:475.10px;top:299.00px;width:6.50px;height:6.80px;background:linear-gradient(#e6e5e0,#b0afa8);border:0.5px solid #8a8a84"></div>
<div class="a" style="left:476.80px;top:300.70px;width:3.10px;height:3.40px;border:0.5px solid #555;background:#d8d8d4"></div>
<div class="a" style="left:483.80px;top:299.00px;width:6.50px;height:6.80px;background:linear-gradient(#e6e5e0,#b0afa8);border:0.5px solid #8a8a84"></div>
<div class="a" style="left:485.50px;top:300.70px;width:3.10px;height:3.40px;border:0.5px solid #555;background:#d8d8d4"></div>
<div class="a" style="left:425.50px;top:309.80px;width:4.40px;height:4.60px;background:#f4f4f2;border:0.7px solid #8a8a8a"></div>
<svg class="a" style="left:425px;top:309px" width="6" height="6" viewBox="425 309 6 6"><path d="M426.4 312l1.1 1.2 1.7-2.5" fill="none" stroke="#444" stroke-width="0.7"/></svg>
<div class="t s" style="left:432.50px;top:310.54px;font-size:4.600px;line-height:5.52px;color:#7a7a7a;transform:scaleX(0.9181);transform-origin:0 50%;">Alle Knoten b. Filtern einblen</div>
<div class="a" style="left:411.50px;top:319.30px;width:90.00px;height:0.70px;background:#d6d4cc"></div>
<div class="a" style="left:423.20px;top:324.00px;width:66.70px;height:25.60px;background:#d4d0c6;border:0.6px solid #8a8880;border-right-color:#eee;border-bottom-color:#eee"></div>
<div class="a" style="left:483.60px;top:324.60px;width:5.80px;height:24.50px;background:#ebeae6"></div>
<div class="a" style="left:483.80px;top:324.80px;width:5.40px;height:5.00px;background:#e2e0da;border:0.5px solid #888"></div>
<div class="a" style="left:483.80px;top:343.90px;width:5.40px;height:5.00px;background:#e2e0da;border:0.5px solid #888"></div>
<svg class="a" style="left:483px;top:324px" width="7" height="26" viewBox="483 324 7 26"><path d="M485.2 328.3l1.3-1.5 1.3 1.5z" fill="#222"/><path d="M485.2 345.8l1.3 1.5 1.3-1.5z" fill="#222"/></svg>
<div class="t s" style="left:424.00px;top:326.34px;font-size:4.600px;line-height:5.52px;color:#1a1a1a;transform:scaleX(0.9180);transform-origin:0 50%;">Kommentar:</div>
<div class="t s" style="left:424.00px;top:332.14px;font-size:4.600px;line-height:5.52px;color:#1a1a1a;transform:scaleX(0.8950);transform-origin:0 50%;">Änderung:</div>
<div class="t s" style="left:424.00px;top:337.94px;font-size:4.600px;line-height:5.52px;color:#1a1a1a;transform:scaleX(0.9036);transform-origin:0 50%;">Änderungsstand: Nicht definiert</div>
<div class="t s" style="left:424.00px;top:343.74px;font-size:4.600px;line-height:5.52px;color:#1a1a1a;transform:scaleX(0.8779);transform-origin:0 50%;">Zuletzt aktualisiert: 10.05.2010</div>
<div class="a" style="left:410.00px;top:356.60px;width:94.50px;height:11.40px;background:#f3f3ef"></div>
<svg class="a" style="left:410px;top:356px" width="95" height="12" viewBox="410 356 95 12"><rect x="414.5" y="358.5" width="5" height="7" fill="none" stroke="#666" stroke-width="0.6"/><path d="M414.5 361h5M414.5 363h5M417 358.5v7" stroke="#888" stroke-width="0.4"/><rect x="426.5" y="358.5" width="5" height="7" fill="#222"/><rect x="427.3" y="361.3" width="3.4" height="1" fill="#bbb"/><path d="M439 365.5v-2.5l3-3 3 3v2.5z" fill="none" stroke="#444" stroke-width="0.8"/><rect x="451.5" y="357.3" width="8" height="9.5" fill="#f8f8f8" stroke="#999" stroke-width="0.4"/><path d="M452.5 365.5v-3h5v3zM453.5 362.5v-2.5h3v2.5z" fill="#555"/><path d="M465 359.5a2.5 2.5 0 0 1 5 0l-1.5 3v2h-2v-2z" fill="#555"/><rect x="478" y="359" width="5" height="5.5" fill="#333"/><rect x="478.8" y="361.2" width="3.4" height="1" fill="#ccc"/><path d="M491 362.5l3-3 3 3-3 3z" fill="#666"/><g fill="none" stroke="#aaa" stroke-width="0.5"><path d="M422.8 360.5l-0.8 1.5 0.8 1.5M435.3 360.5l-0.8 1.5 0.8 1.5M448 360.5l0.8 1.5-0.8 1.5M461.5 361l0.8 1.5-0.8 1.5M474 360.5l0.8 1.5-0.8 1.5M486.5 360.5l0.8 1.5-0.8 1.5M500 360.5l0.8 1.5-0.8 1.5"/></g></svg>
<div class="a" style="left:6.00px;top:368.00px;width:498.50px;height:8.60px;background:linear-gradient(#bac6e0,#95a5cc);border-bottom:1px solid #505a70"></div>
<div class="t s" style="left:9.60px;top:370.34px;font-size:4.600px;line-height:5.52px;color:#1a2240;transform:scaleX(0.8981);transform-origin:0 50%;">Objekt-Eigenschaften</div>
<svg class="a" style="left:490px;top:369px" width="14" height="7" viewBox="490 369 14 7"><rect x="494.2" y="370.8" width="1.6" height="3.4" fill="#223"/><path d="M499.6 370.9l2.6 2.6M502.2 370.9l-2.6 2.6" stroke="#223" stroke-width="0.9"/></svg>
<div class="a" style="left:6.00px;top:376.60px;width:498.50px;height:141.00px;background:#e0ddd4"></div>
<div class="a" style="left:7.70px;top:378.40px;width:73.60px;height:135.00px;background:#fff;border:1.9px solid #9c9a96;border-right:0.8px solid #eee;border-bottom:0.8px solid #eee"></div>
<svg class="a" style="left:9px;top:378px" width="55" height="32" viewBox="9 378 55 32"><rect x="12.2" y="382" width="3.6" height="3.6" fill="#eee" stroke="#888" stroke-width="0.6"/><path d="M12.9 383.8h2.2" stroke="#333" stroke-width="0.5"/><path d="M18.3 386.5v-2.5h1v-2h1v-1h3v1h1v2h1v2.5z" fill="#555"/><rect x="20" y="381.3" width="3" height="1.5" fill="#999"/><rect x="20.4" y="389" width="3.6" height="3.6" fill="#eee" stroke="#aaa" stroke-width="0.6"/><path d="M21.1 390.8h2.2" stroke="#777" stroke-width="0.5"/><path d="M26.5 393v-2.5l2-2 2 2v2.5zM28 388.5v-2h1v2z" fill="#666"/><path d="M33 395v6.5M38.5 395v6.5M33 398h5.5M33 402v6.5M38.5 402v6.5M33 405h5.5" stroke="#222" stroke-width="1.5"/><rect x="40.5" y="394.8" width="20" height="5.6" fill="#d8d8d8"/><path d="M29 393v11.5h3M29 398h3" fill="none" stroke="#bbb" stroke-width="0.5" stroke-dasharray="0.6 0.6"/></svg>
<div class="t s" style="left:26.80px;top:381.74px;font-size:4.600px;line-height:5.52px;color:#1e1e1e;transform:scaleX(0.7819);transform-origin:0 50%;">Setup1</div>
<div class="t s" style="left:33.40px;top:388.74px;font-size:4.600px;line-height:5.52px;color:#1e1e1e;transform:scaleX(0.7494);transform-origin:0 50%;">SX</div>
<div class="t s" style="left:41.20px;top:395.74px;font-size:4.600px;line-height:5.52px;color:#1e1e1e;transform:scaleX(0.8810);transform-origin:0 50%;">Stellplatz1</div>
<div class="t s" style="left:41.20px;top:402.74px;font-size:4.600px;line-height:5.52px;color:#1e1e1e;transform:scaleX(0.8810);transform-origin:0 50%;">Stellplatz2</div>
<div class="a" style="left:82.20px;top:378.60px;width:417.50px;height:134.70px;background:#d8d5ca;border-left:0.8px solid #f6f6f2;border-bottom:1.3px solid #6e6e6a"></div>
<div class="a" style="left:498.40px;top:387.90px;width:1.30px;height:125.40px;background:#6e6e6a"></div>
<div class="a" style="left:100.50px;top:387.90px;width:398.00px;height:0.80px;background:#f6f6f2"></div>
<div class="t s" style="left:86.00px;top:382.04px;font-size:4.600px;line-height:5.52px;color:#1e1e1e;transform:scaleX(0.9508);transform-origin:0 50%;">Kopf</div>
<div class="t s" style="left:102.70px;top:382.44px;font-size:4.600px;line-height:5.52px;color:#1e1e1e;transform:scaleX(0.8877);transform-origin:0 50%;">Pipettenwechsler 1</div>
<div class="a" style="left:139.60px;top:380.20px;width:0.90px;height:8.30px;background:#4a4a4a"></div>
<div class="t s" style="left:142.70px;top:382.44px;font-size:4.600px;line-height:5.52px;color:#1e1e1e;transform:scaleX(0.9082);transform-origin:0 50%;">Pipettenwechsler 2</div>
<div class="a" style="left:180.40px;top:380.20px;width:0.90px;height:8.30px;background:#4a4a4a"></div>
<div class="t s" style="left:182.70px;top:382.44px;font-size:4.600px;line-height:5.52px;color:#1e1e1e;transform:scaleX(0.9082);transform-origin:0 50%;">Pipettenwechsler 3</div>
<div class="a" style="left:220.40px;top:380.20px;width:0.90px;height:8.30px;background:#4a4a4a"></div>
<div class="t s" style="left:223.00px;top:382.44px;font-size:4.600px;line-height:5.52px;color:#1e1e1e;transform:scaleX(0.9134);transform-origin:0 50%;">Pipettenwechsler 4</div>
<div class="a" style="left:261.00px;top:380.20px;width:0.90px;height:8.30px;background:#4a4a4a"></div>
<div class="t s" style="left:263.30px;top:382.44px;font-size:4.600px;line-height:5.52px;color:#1e1e1e;transform:scaleX(0.9255);transform-origin:0 50%;">Pipettenkonfiguration</div>
<div class="a" style="left:305.00px;top:380.20px;width:0.90px;height:8.30px;background:#4a4a4a"></div>
<div class="t s" style="left:307.20px;top:382.44px;font-size:4.600px;line-height:5.52px;color:#1e1e1e;transform:scaleX(0.9078);transform-origin:0 50%;">Simulation</div>
<div class="a" style="left:328.50px;top:380.20px;width:0.90px;height:8.30px;background:#4a4a4a"></div>
<div class="a" style="left:100.30px;top:380.20px;width:0.90px;height:8.30px;background:#4a4a4a"></div>
<div class="a" style="left:85.50px;top:392.50px;width:153.00px;height:39.20px;border:0.7px solid #c0beb6;border-radius:1.2px;box-shadow:0.6px 0.6px 0 #f4f4f0, inset 0.6px 0.6px 0 #f4f4f0"></div>
<div class="a" style="left:88.00px;top:390.00px;width:37.00px;height:5.00px;background:#d8d5ca"></div>
<div class="t s" style="left:89.20px;top:390.84px;font-size:4.600px;line-height:5.52px;color:#333;transform:scaleX(0.9217);transform-origin:0 50%;">Kopfkonfiguration</div>
<div class="a" style="left:89.80px;top:397.60px;width:5.20px;height:4.90px;background:#fff;border:0.9px solid #555;border-right-color:#e8e8e8;border-bottom-color:#e8e8e8"></div>
<div class="t s" style="left:97.00px;top:398.24px;font-size:4.600px;line-height:5.52px;color:#1e1e1e;transform:scaleX(0.8523);transform-origin:0 50%;">Umgehen</div>
<div class="t s" style="left:88.20px;top:405.94px;font-size:4.600px;line-height:5.52px;color:#1e1e1e;transform:scaleX(0.9615);transform-origin:0 50%;">Kopftyp</div>
<div class="t s" style="left:88.20px;top:416.94px;font-size:4.600px;line-height:5.52px;color:#444;transform:scaleX(0.8884);transform-origin:0 50%;">Kopfhöhe</div>
<div class="a" style="left:85.80px;top:437.60px;width:150.00px;height:61.00px;border:0.7px solid #c0beb6;border-radius:1.2px;box-shadow:0.6px 0.6px 0 #f4f4f0, inset 0.6px 0.6px 0 #f4f4f0"></div>
<div class="a" style="left:88.30px;top:435.10px;width:19.50px;height:5.00px;background:#d8d5ca"></div>
<div class="t s" style="left:89.50px;top:435.94px;font-size:4.600px;line-height:5.52px;color:#333;transform:scaleX(0.9623);transform-origin:0 50%;">Kamera</div>
<div class="t s" style="left:88.30px;top:443.34px;font-size:4.600px;line-height:5.52px;color:#1e1e1e;transform:scaleX(0.8749);transform-origin:0 50%;">Kopfkamera</div>
<div class="a" style="left:154.70px;top:441.50px;width:77.00px;height:7.80px;background:#d8d5cb;border:0.9px solid #76746e;border-right-color:#f0f0ec;border-bottom-color:#f0f0ec"></div>
<div class="a" style="left:226.50px;top:442.40px;width:4.40px;height:6.00px;background:#dcdad4;border-right:0.6px solid #404040;border-bottom:0.6px solid #404040;border-top:0.5px solid #fff;border-left:0.5px solid #fff"></div>
<svg class="a" style="left:227.2px;top:443.9px" width="3" height="3" viewBox="227.2 443.9 3 3"><path d="M227.30 444.50h2.8l-1.4 1.8z" fill="#a0a0a0"/></svg>
<div class="t s" style="left:156.30px;top:443.64px;font-size:4.600px;line-height:5.52px;color:#b4b2ac;transform:scaleX(0.7754);transform-origin:0 50%;">(Keine)</div>
<div class="t s" style="left:88.30px;top:455.34px;font-size:4.600px;line-height:5.52px;color:#1e1e1e;transform:scaleX(0.8604);transform-origin:0 50%;">Stationäre Kamera</div>
<div class="a" style="left:154.70px;top:453.50px;width:77.00px;height:7.80px;background:#fff;border:0.9px solid #76746e;border-right-color:#f0f0ec;border-bottom-color:#f0f0ec"></div>
<div class="a" style="left:226.50px;top:454.40px;width:4.40px;height:6.00px;background:#dcdad4;border-right:0.6px solid #404040;border-bottom:0.6px solid #404040;border-top:0.5px solid #fff;border-left:0.5px solid #fff"></div>
<svg class="a" style="left:227.2px;top:455.9px" width="3" height="3" viewBox="227.2 455.9 3 3"><path d="M227.30 456.50h2.8l-1.4 1.8z" fill="#000"/></svg>
<div class="t s" style="left:156.30px;top:455.64px;font-size:4.600px;line-height:5.52px;color:#111;transform:scaleX(0.9010);transform-origin:0 50%;">IC Camera X (33) 66/60</div>
<div class="t s" style="left:88.30px;top:466.44px;font-size:4.600px;line-height:5.52px;color:#1e1e1e;transform:scaleX(0.8878);transform-origin:0 50%;">Flip-Chip-Kamera</div>
<div class="a" style="left:154.70px;top:464.60px;width:77.00px;height:7.80px;background:#fff;border:0.9px solid #76746e;border-right-color:#f0f0ec;border-bottom-color:#f0f0ec"></div>
<div class="a" style="left:226.50px;top:465.50px;width:4.40px;height:6.00px;background:#dcdad4;border-right:0.6px solid #404040;border-bottom:0.6px solid #404040;border-top:0.5px solid #fff;border-left:0.5px solid #fff"></div>
<svg class="a" style="left:227.2px;top:467.0px" width="3" height="3" viewBox="227.2 467.0 3 3"><path d="M227.30 467.60h2.8l-1.4 1.8z" fill="#000"/></svg>
<div class="t s" style="left:156.30px;top:466.74px;font-size:4.600px;line-height:5.52px;color:#111;transform:scaleX(0.7754);transform-origin:0 50%;">(Keine)</div>
<div class="t s" style="left:88.30px;top:477.94px;font-size:4.600px;line-height:5.52px;color:#1e1e1e;transform:scaleX(0.8888);transform-origin:0 50%;">Koplanaritätsmodul</div>
<div class="a" style="left:154.70px;top:476.10px;width:77.00px;height:7.80px;background:#fff;border:0.9px solid #76746e;border-right-color:#f0f0ec;border-bottom-color:#f0f0ec"></div>
<div class="a" style="left:226.50px;top:477.00px;width:4.40px;height:6.00px;background:#dcdad4;border-right:0.6px solid #404040;border-bottom:0.6px solid #404040;border-top:0.5px solid #fff;border-left:0.5px solid #fff"></div>
<svg class="a" style="left:227.2px;top:478.5px" width="3" height="3" viewBox="227.2 478.5 3 3"><path d="M227.30 479.10h2.8l-1.4 1.8z" fill="#000"/></svg>
<div class="t s" style="left:156.30px;top:478.24px;font-size:4.600px;line-height:5.52px;color:#111;transform:scaleX(0.7754);transform-origin:0 50%;">(Keine)</div>
<div class="t s" style="left:88.30px;top:489.04px;font-size:4.600px;line-height:5.52px;color:#555;transform:scaleX(0.7557);transform-origin:0 50%;">BR-Sensor</div>
<div class="a" style="left:154.70px;top:487.20px;width:77.00px;height:7.80px;background:#d8d5cb;border:0.9px solid #76746e;border-right-color:#f0f0ec;border-bottom-color:#f0f0ec"></div>
<div class="a" style="left:226.50px;top:488.10px;width:4.40px;height:6.00px;background:#dcdad4;border-right:0.6px solid #404040;border-bottom:0.6px solid #404040;border-top:0.5px solid #fff;border-left:0.5px solid #fff"></div>
<svg class="a" style="left:227.2px;top:489.59999999999997px" width="3" height="3" viewBox="227.2 489.59999999999997 3 3"><path d="M227.30 490.20h2.8l-1.4 1.8z" fill="#a0a0a0"/></svg>
<div class="t s" style="left:156.30px;top:489.34px;font-size:4.600px;line-height:5.52px;color:#b4b2ac;transform:scaleX(0.7754);transform-origin:0 50%;">(Keine)</div>
<div class="a" style="left:243.30px;top:391.80px;width:163.40px;height:39.20px;border:0.7px solid #c0beb6;border-radius:1.2px;box-shadow:0.6px 0.6px 0 #f4f4f0, inset 0.6px 0.6px 0 #f4f4f0"></div>
<div class="a" style="left:245.80px;top:389.30px;width:37.40px;height:5.00px;background:#d8d5ca"></div>
<div class="t s" style="left:247.00px;top:390.14px;font-size:4.600px;line-height:5.52px;color:#333;transform:scaleX(0.8988);transform-origin:0 50%;">Tischkonfiguration</div>
<div class="t s" style="left:246.00px;top:394.54px;font-size:4.600px;line-height:5.52px;color:#1e1e1e;transform:scaleX(0.8096);transform-origin:0 50%;">Tisch-</div>
<div class="t s" style="left:246.00px;top:400.14px;font-size:4.600px;line-height:5.52px;color:#1e1e1e;transform:scaleX(0.9477);transform-origin:0 50%;">Bindnah</div>
<div class="a" style="left:275.00px;top:395.20px;width:103.30px;height:8.30px;background:#fff;border:0.9px solid #76746e;border-right-color:#f0f0ec;border-bottom-color:#f0f0ec"></div>
<div class="a" style="left:373.10px;top:396.10px;width:4.40px;height:6.50px;background:#dcdad4;border-right:0.6px solid #404040;border-bottom:0.6px solid #404040;border-top:0.5px solid #fff;border-left:0.5px solid #fff"></div>
<svg class="a" style="left:373.8px;top:397.84999999999997px" width="3" height="3" viewBox="373.8 397.84999999999997 3 3"><path d="M373.90 398.45h2.8l-1.4 1.8z" fill="#000"/></svg>
<div class="t s" style="left:276.60px;top:397.59px;font-size:4.600px;line-height:5.52px;color:#111;transform:scaleX(0.8554);transform-origin:0 50%;">Adam X</div>
<div class="t s" style="left:246.00px;top:408.94px;font-size:4.600px;line-height:5.52px;color:#1e1e1e;transform:scaleX(0.8317);transform-origin:0 50%;">Tisch</div>
<div class="a" style="left:275.00px;top:406.30px;width:103.30px;height:7.40px;background:#d8d5ca;border:0.9px solid #76746e;border-right-color:#f0f0ec;border-bottom-color:#f0f0ec"></div>
<div class="t s" style="left:277.00px;top:408.24px;font-size:4.600px;line-height:5.52px;color:#1e1e1e;transform:scaleX(0.8618);transform-origin:0 50%;">System\Table5</div>
<div class="t s" style="left:246.00px;top:420.04px;font-size:4.600px;line-height:5.52px;color:#1e1e1e;transform:scaleX(0.8550);transform-origin:0 50%;">Tischtyp</div>
<div class="a" style="left:275.00px;top:418.00px;width:103.30px;height:8.00px;background:#d8d5ca;border:0.9px solid #76746e;border-right-color:#f0f0ec;border-bottom-color:#f0f0ec"></div>
<div class="t s" style="left:277.00px;top:420.24px;font-size:4.600px;line-height:5.52px;color:#1e1e1e;transform:scaleX(0.8550);transform-origin:0 50%;">Change Over Table 80 X</div>
<svg class="a" style="left:380px;top:406px" width="27" height="9" viewBox="380 406 27 9"><rect x="381.3" y="407.2" width="7.4" height="7" fill="#e4e2dc" stroke="#fff" stroke-width="0.4"/><path d="M382.5 410.8h4.5M385.3 409l1.8 1.8-1.8 1.8" fill="none" stroke="#000" stroke-width="0.9"/><path d="M381.3 414.2h7.4v-7" fill="none" stroke="#555" stroke-width="0.5"/><rect x="389.8" y="407.2" width="8" height="7" fill="#e4e2dc"/><path d="M390.8 413.5v-3.5h3l1-1h2.5v4.5z" fill="#9a9a60" stroke="#555" stroke-width="0.4"/><path d="M389.8 414.2h8v-7" fill="none" stroke="#555" stroke-width="0.5"/><rect x="398.4" y="407.2" width="7.6" height="7" fill="#e8e6e0"/><circle cx="402.2" cy="410.7" r="2.2" fill="#ddd" stroke="#888" stroke-width="0.6"/><path d="M398.4 414.2h7.6v-7" fill="none" stroke="#777" stroke-width="0.5"/></svg>
<div class="a" style="left:243.30px;top:438.40px;width:163.20px;height:61.40px;border:0.7px solid #c0beb6;border-radius:1.2px;box-shadow:0.6px 0.6px 0 #f4f4f0, inset 0.6px 0.6px 0 #f4f4f0"></div>
<div class="a" style="left:245.80px;top:435.90px;width:35.70px;height:5.00px;background:#d8d5ca"></div>
<div class="t s" style="left:247.00px;top:436.74px;font-size:4.600px;line-height:5.52px;color:#333;transform:scaleX(0.9049);transform-origin:0 50%;">Pipettenwechsler</div>
<div class="t s" style="left:245.80px;top:448.34px;font-size:4.600px;line-height:5.52px;color:#1e1e1e;transform:scaleX(0.8388);transform-origin:0 50%;">Reihe 1</div>
<div class="a" style="left:279.20px;top:445.70px;width:68.30px;height:8.50px;background:#fff;border:0.9px solid #76746e;border-right-color:#f0f0ec;border-bottom-color:#f0f0ec"></div>
<div class="a" style="left:342.30px;top:446.60px;width:4.40px;height:6.70px;background:#dcdad4;border-right:0.6px solid #404040;border-bottom:0.6px solid #404040;border-top:0.5px solid #fff;border-left:0.5px solid #fff"></div>
<svg class="a" style="left:343.0px;top:448.45px" width="3" height="3" viewBox="343.0 448.45 3 3"><path d="M343.10 449.05h2.8l-1.4 1.8z" fill="#000"/></svg>
<div class="t s" style="left:280.80px;top:448.19px;font-size:4.600px;line-height:5.52px;color:#111;transform:scaleX(0.8886);transform-origin:0 50%;">NC Twin Flexible 8</div>
<div class="a" style="left:351.70px;top:447.00px;width:4.00px;height:4.30px;background:#fff;border:0.7px solid #444;border-right-color:#e8e8e8;border-bottom-color:#e8e8e8"></div>
<svg class="a" style="left:351px;top:446.2px" width="6" height="6" viewBox="351 446.2 6 6"><path d="M352.6 448.80l0.9 1 1.5-2.2" fill="none" stroke="#000" stroke-width="0.6"/></svg>
<div class="t s" style="left:357.50px;top:448.34px;font-size:4.600px;line-height:5.52px;color:#111;transform:scaleX(0.8919);transform-origin:0 50%;">Pro Gangie zuweisen</div>
<div class="t s" style="left:245.80px;top:459.94px;font-size:4.600px;line-height:5.52px;color:#1e1e1e;transform:scaleX(0.8388);transform-origin:0 50%;">Reihe 2</div>
<div class="a" style="left:279.20px;top:457.30px;width:68.30px;height:8.50px;background:#fff;border:0.9px solid #76746e;border-right-color:#f0f0ec;border-bottom-color:#f0f0ec"></div>
<div class="a" style="left:342.30px;top:458.20px;width:4.40px;height:6.70px;background:#dcdad4;border-right:0.6px solid #404040;border-bottom:0.6px solid #404040;border-top:0.5px solid #fff;border-left:0.5px solid #fff"></div>
<svg class="a" style="left:343.0px;top:460.05px" width="3" height="3" viewBox="343.0 460.05 3 3"><path d="M343.10 460.65h2.8l-1.4 1.8z" fill="#000"/></svg>
<div class="t s" style="left:280.80px;top:459.79px;font-size:4.600px;line-height:5.52px;color:#111;transform:scaleX(0.8886);transform-origin:0 50%;">NC Twin Flexible 8</div>
<div class="a" style="left:351.70px;top:458.60px;width:4.00px;height:4.30px;background:#fff;border:0.7px solid #444;border-right-color:#e8e8e8;border-bottom-color:#e8e8e8"></div>
<svg class="a" style="left:351px;top:457.8px" width="6" height="6" viewBox="351 457.8 6 6"><path d="M352.6 460.40l0.9 1 1.5-2.2" fill="none" stroke="#000" stroke-width="0.6"/></svg>
<div class="t s" style="left:357.50px;top:459.94px;font-size:4.600px;line-height:5.52px;color:#111;transform:scaleX(0.8919);transform-origin:0 50%;">Pro Gangie zuweisen</div>
<div class="t s" style="left:245.80px;top:470.14px;font-size:4.600px;line-height:5.52px;color:#1e1e1e;transform:scaleX(0.8388);transform-origin:0 50%;">Reihe 3</div>
<div class="a" style="left:279.20px;top:468.40px;width:68.30px;height:8.50px;background:#d8d5cb;border:0.9px solid #76746e;border-right-color:#f0f0ec;border-bottom-color:#f0f0ec"></div>
<div class="a" style="left:342.30px;top:469.30px;width:4.40px;height:6.70px;background:#dcdad4;border-right:0.6px solid #404040;border-bottom:0.6px solid #404040;border-top:0.5px solid #fff;border-left:0.5px solid #fff"></div>
<svg class="a" style="left:343.0px;top:471.15px" width="3" height="3" viewBox="343.0 471.15 3 3"><path d="M343.10 471.75h2.8l-1.4 1.8z" fill="#a0a0a0"/></svg>
<div class="t s" style="left:280.80px;top:470.89px;font-size:4.600px;line-height:5.52px;color:#b4b2ac;transform:scaleX(0.7754);transform-origin:0 50%;">(Keine)</div>
<div class="a" style="left:351.70px;top:468.80px;width:4.00px;height:4.30px;background:#e4e2dc;border:0.7px solid #999;border-right-color:#e8e8e8;border-bottom-color:#e8e8e8"></div>
<div class="t s" style="left:357.50px;top:470.14px;font-size:4.600px;line-height:5.52px;color:#b8b6b0;transform:scaleX(0.8919);transform-origin:0 50%;">Pro Gangie zuweisen</div>
<div class="t s" style="left:245.80px;top:482.14px;font-size:4.600px;line-height:5.52px;color:#1e1e1e;transform:scaleX(0.8388);transform-origin:0 50%;">Reihe 4</div>
<div class="a" style="left:279.20px;top:479.70px;width:68.30px;height:8.50px;background:#d8d5cb;border:0.9px solid #76746e;border-right-color:#f0f0ec;border-bottom-color:#f0f0ec"></div>
<div class="a" style="left:342.30px;top:480.60px;width:4.40px;height:6.70px;background:#dcdad4;border-right:0.6px solid #404040;border-bottom:0.6px solid #404040;border-top:0.5px solid #fff;border-left:0.5px solid #fff"></div>
<svg class="a" style="left:343.0px;top:482.45px" width="3" height="3" viewBox="343.0 482.45 3 3"><path d="M343.10 483.05h2.8l-1.4 1.8z" fill="#a0a0a0"/></svg>
<div class="t s" style="left:280.80px;top:482.19px;font-size:4.600px;line-height:5.52px;color:#b4b2ac;transform:scaleX(0.7754);transform-origin:0 50%;">(Keine)</div>
<div class="a" style="left:351.70px;top:480.80px;width:4.00px;height:4.30px;background:#e4e2dc;border:0.7px solid #999;border-right-color:#e8e8e8;border-bottom-color:#e8e8e8"></div>
<div class="t s" style="left:357.50px;top:482.14px;font-size:4.600px;line-height:5.52px;color:#b8b6b0;transform:scaleX(0.8919);transform-origin:0 50%;">Pro Gangie zuweisen</div>
<div class="a" style="left:154.50px;top:405.80px;width:77.30px;height:8.70px;background:#fff;border:0.9px solid #76746e;border-right-color:#f0f0ec;border-bottom-color:#f0f0ec"></div>
<div class="a" style="left:226.60px;top:406.70px;width:4.40px;height:6.90px;background:#dcdad4;border-right:0.6px solid #404040;border-bottom:0.6px solid #404040;border-top:0.5px solid #fff;border-left:0.5px solid #fff"></div>
<svg class="a" style="left:227.3px;top:408.65000000000003px" width="3" height="3" viewBox="227.3 408.65000000000003 3 3"><path d="M227.40 409.25h2.8l-1.4 1.8z" fill="#000"/></svg>
<div class="t s" style="left:156.10px;top:408.39px;font-size:4.600px;line-height:5.52px;color:#111;transform:scaleX(0.8842);transform-origin:0 50%;">Twin Head Six</div>
<div class="a" style="left:154.50px;top:414.50px;width:77.60px;height:24.00px;background:#fff;border:0.7px solid #111"></div>
<div class="a" style="left:155.20px;top:415.20px;width:76.20px;height:5.00px;background:#0a246a"></div>
<div class="t s" style="left:156.00px;top:415.94px;font-size:4.600px;line-height:5.52px;color:#fff;transform:scaleX(0.8842);transform-origin:0 50%;">Twin Head Six</div>
<div class="t s" style="left:156.00px;top:421.89px;font-size:4.600px;line-height:5.52px;color:#111;transform:scaleX(0.9027);transform-origin:0 50%;">Twin Head High Force Six</div>
<div class="t s" style="left:156.00px;top:427.84px;font-size:4.600px;line-height:5.52px;color:#111;transform:scaleX(0.8433);transform-origin:0 50%;">CPP 12 2mm</div>
<div class="t s" style="left:156.00px;top:433.79px;font-size:4.600px;line-height:5.52px;color:#111;transform:scaleX(0.8462);transform-origin:0 50%;">CAP 20 10m</div>
<div class="a" style="left:6.00px;top:513.30px;width:498.50px;height:4.30px;background:#e0ddd4"></div>
<div class="a" style="left:6.00px;top:517.30px;width:498.50px;height:9.70px;background:#f3f2ed;border-top:0.9px solid #777"></div>
<div class="a" style="left:6.30px;top:518.00px;width:20.20px;height:8.50px;background:#eaeef6"></div>
<div class="t s" style="left:7.00px;top:520.44px;font-size:4.600px;line-height:5.52px;color:#6a78a0;transform:scaleX(0.9643);transform-origin:0 50%;">Hinweise</div>
<div class="a" style="left:26.60px;top:517.30px;width:32.00px;height:9.20px;background:#fff;border:0.8px solid #666;border-top:none;border-radius:0 0 1px 1px"></div>
<div class="t s" style="left:28.50px;top:520.24px;font-size:4.600px;line-height:5.52px;color:#222;transform:scaleX(0.8854);transform-origin:0 50%;">SX Test\Setup1</div>
<div class="t s" style="left:60.50px;top:520.44px;font-size:4.600px;line-height:5.52px;color:#6a78a0;transform:scaleX(0.8868);transform-origin:0 50%;">Tische in Rüstung</div>
<div class="a" style="left:95.00px;top:519.00px;width:0.80px;height:6.30px;background:#333"></div>
<div class="t s" style="left:97.50px;top:520.44px;font-size:4.600px;line-height:5.52px;color:#4a58a0;transform:scaleX(0.8923);transform-origin:0 50%;">Kommentare</div>
<div class="a" style="left:6.00px;top:527.00px;width:498.50px;height:12.50px;background:#f7f6f3;border-top:0.7px solid #d8d8d8"></div>
<div class="t s" style="left:7.00px;top:532.84px;font-size:4.600px;line-height:5.52px;color:#111;transform:scaleX(0.9054);transform-origin:0 50%;">Drücken Sie F1, um die Hilfe aufzurufen.</div>
<svg class="a" style="left:343px;top:530px" width="7" height="8" viewBox="343 530 7 8"><circle cx="346.2" cy="532.6" r="1.8" fill="#333"/><path d="M343.8 537.5v-1.5a2.4 2.4 0 0 1 4.8 0v1.5z" fill="#333"/><rect x="346" y="534.5" width="2.6" height="3" fill="#fff" stroke="#333" stroke-width="0.4"/></svg>
<div class="t s" style="left:349.30px;top:532.64px;font-size:4.600px;line-height:5.52px;color:#222;transform:scaleX(0.9312);transform-origin:0 50%;">Benutzer:&nbsp; Service</div>
<svg class="a" style="left:398px;top:530px" width="8" height="8" viewBox="398 530 8 8"><rect x="399" y="531" width="4.5" height="4" fill="#8aa0d0" stroke="#556" stroke-width="0.4"/><path d="M401 535.5v2M402 537l2.5 0.5" stroke="#445" stroke-width="0.6"/></svg>
<div class="t s" style="left:405.00px;top:532.64px;font-size:4.600px;line-height:5.52px;color:#222;transform:scaleX(0.8771);transform-origin:0 50%;">Server:&nbsp; SPROSRVR100-100\SIPLACE_2008EXPR</div>
<div class="a" style="left:4.80px;top:149.60px;width:500.40px;height:390.40px;border:1.6px solid #a4a4a4"></div>
</div>
</body></html>
